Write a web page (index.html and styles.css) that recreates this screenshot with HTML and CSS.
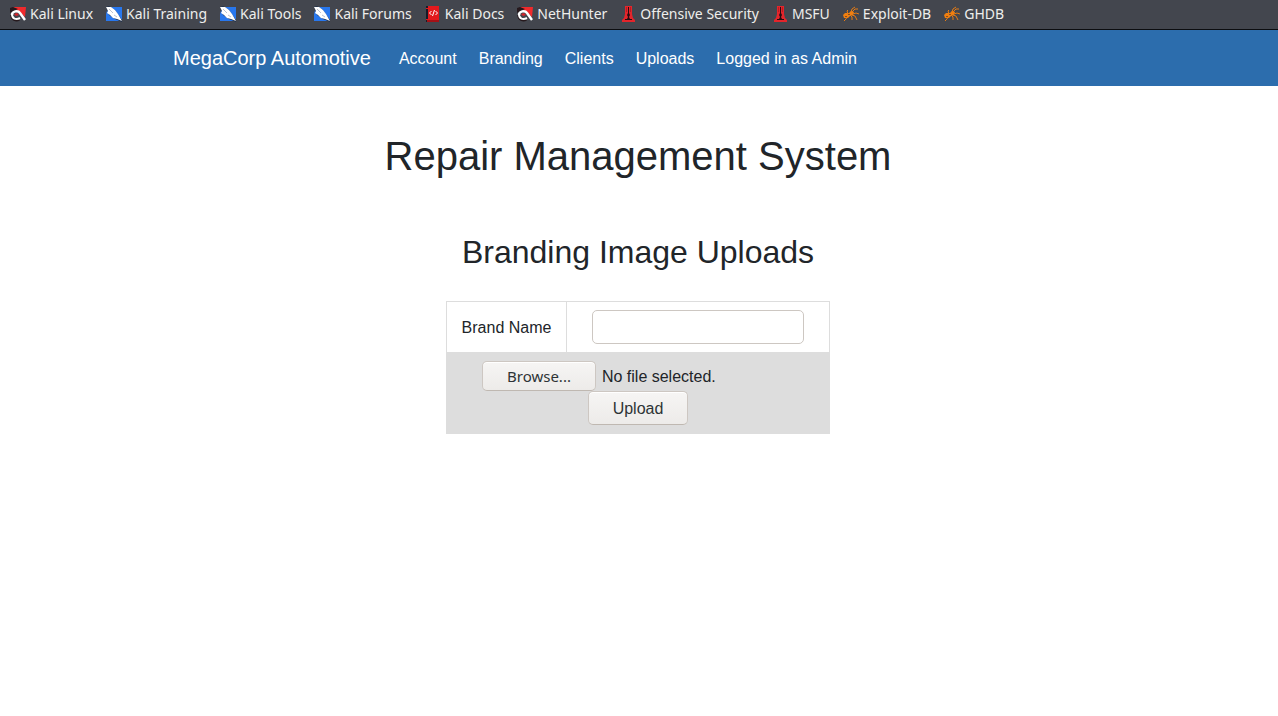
FILE: index.html
```
<!DOCTYPE html>
<html lang="en">
<head>
<meta charset="utf-8">
<meta name="viewport" content="width=device-width, initial-scale=1">
<title>Branding Image Uploads</title>
<link rel="stylesheet" href="styles.css">
</head>
<body>
<svg class="sprite" aria-hidden="true">
  <symbol id="dragon" viewBox="0 0 16 16">
    <path fill="#f02a2c" d="M3 1h13l-1 10-4-4-5-3z"/>
    <path fill="#26191d" d="M0 2l3-1 5 2-4 2-4 2z"/>
    <path fill="none" stroke="#26191d" stroke-width="3.4" d="M2 9c0 4 4 6 7 4"/>
    <path fill="none" stroke="#fff" stroke-width="2.4" d="M2 9c0-4 6-5 8-2l5 7"/>
    <path fill="none" stroke="#fff" stroke-width="2" d="M2 8c0 5 4 6 8 4"/>
    <path fill="#d8232a" d="M4 8l3-1 2 2-3 1z"/>
  </symbol>
  <symbol id="tools" viewBox="0 0 16 16">
    <path fill="#2877ed" d="M2 1h14v12l-2 2H0V8z"/>
    <path fill="#20324f" d="M0 1l3-1 6 4 7 10v2l-7-3-6-4z"/>
    <path fill="#fff" d="M0 1l5 0 4 3 3 4 4 7-5-2-4-1-3-3-3-2 1-2z"/>
    <path fill="none" stroke="#9da8b8" stroke-width=".7" d="M3 3l4 4M8 9l3 2"/>
  </symbol>
  <symbol id="docs" viewBox="0 0 16 16">
    <path fill="#171b28" d="M1 0h3v16H1z"/>
    <path fill="#e1191d" d="M3 0h11v14H3z"/>
    <path fill="#a51116" d="M2 14h12v2H2z"/>
    <path fill="#e1191d" d="M1 2h2v1H1zM1 13h2v1H1z"/>
    <path fill="none" stroke="#fff" stroke-width="1" d="M6.500 5L4.500 7l2 2M10.500 5l2 2-2 2M9.500 4l-2 6"/>
  </symbol>
  <symbol id="tower" viewBox="0 0 16 16">
    <path fill="#e4252b" d="M5 0h7v8l1 4 2 2v2H2v-2l2-2 1-4z"/>
    <path fill="#260c10" d="M8 1h1v6l1 2-1 2 1 2h2v1H5v-1h2l1-2-1-2 1-2z"/>
    <path fill="#b71c22" d="M6 1h1v5H6zM10 1h1v5h-1z"/>
  </symbol>
  <symbol id="spider" viewBox="0 0 16 16">
    <path fill="#f07f10" d="M0 9l2-2 4 0 2-2 3 1-1 3-3 1-2 2-4 0z"/>
    <path fill="none" stroke="#e57b14" stroke-width="1" d="M5 8l-1-3 1-1M8 6l1-3 3-2M9 6l3-3h3M10 8l3-1 3 1M9 9l3 1 2 4M7 9l2 2v3M4 11l-1 2-2 2"/>
    <path fill="#8b4e1b" d="M5 8h2v1H5zM2 10h2v1H2z"/>
  </symbol>
</svg>

<nav class="bookmarks" aria-label="Bookmarks">
  <a class="bookmark" href="#"><svg class="favicon"><use href="#dragon"/></svg>Kali Linux</a>
  <a class="bookmark" href="#"><svg class="favicon"><use href="#tools"/></svg>Kali Training</a>
  <a class="bookmark" href="#"><svg class="favicon"><use href="#tools"/></svg>Kali Tools</a>
  <a class="bookmark" href="#"><svg class="favicon"><use href="#tools"/></svg>Kali Forums</a>
  <a class="bookmark" href="#"><svg class="favicon"><use href="#docs"/></svg>Kali Docs</a>
  <a class="bookmark" href="#"><svg class="favicon"><use href="#dragon"/></svg>NetHunter</a>
  <a class="bookmark" href="#"><svg class="favicon"><use href="#tower"/></svg>Offensive Security</a>
  <a class="bookmark" href="#"><svg class="favicon"><use href="#tower"/></svg>MSFU</a>
  <a class="bookmark" href="#"><svg class="favicon"><use href="#spider"/></svg>Exploit-DB</a>
  <a class="bookmark" href="#"><svg class="favicon"><use href="#spider"/></svg>GHDB</a>
</nav>

<header class="navbar">
  <nav class="navbar-inner" aria-label="Main">
    <a class="brand" href="#">MegaCorp Automotive</a>
    <div class="nav-links">
      <a class="nav-link" href="#">Account</a>
      <a class="nav-link" href="#">Branding</a>
      <a class="nav-link" href="#">Clients</a>
      <a class="nav-link" href="#">Uploads</a>
      <a class="nav-link" href="#">Logged in as Admin</a>
    </div>
  </nav>
</header>

<main class="content">
  <h1 class="title">Repair Management System</h1>
  <h2 class="subtitle">Branding Image Uploads</h2>
  <form>
    <table class="upload-table">
      <tbody>
        <tr>
          <td class="name-cell"><label for="brand-name">Brand Name</label></td>
          <td class="field-cell"><input class="text-input" id="brand-name" type="text"></td>
        </tr>
        <tr class="shaded">
          <td class="file-cell" colspan="2">
            <div class="file-picker">
              <input class="file-input" id="brand-file" type="file">
              <label class="button browse" for="brand-file">Browse...</label>
              <span class="file-status">No file selected.</span>
            </div>
            <button class="button upload" type="submit">Upload</button>
          </td>
        </tr>
      </tbody>
    </table>
  </form>
</main>
</body>
</html>
```
FILE: styles.css
```
* {
  box-sizing: border-box;
}

body {
  margin: 0;
  background: #fff;
  color: #212529;
  font: 16px/24px "Liberation Sans", Arial, sans-serif;
}

a {
  color: inherit;
  text-decoration: none;
}

.sprite {
  display: none;
}

.bookmarks {
  display: flex;
  gap: 13px;
  padding: 0 10px 1px;
  overflow: hidden;
  background: #43464e;
  border-bottom: 1px solid #0c0d10;
  color: #eeeeec;
  font: 14px/28px "Noto Sans", sans-serif;
  white-space: nowrap;
}

.bookmark {
  display: flex;
  align-items: center;
  gap: 4px;
}

.favicon {
  flex: none;
  width: 16px;
  height: 16px;
}

.navbar {
  padding: 13px 16px;
  background: #2c6dad;
  color: #fff;
}

.navbar-inner {
  display: flex;
  flex-wrap: wrap;
  align-items: center;
  gap: 0 28px;
  max-width: 932px;
  margin: 0 auto;
}

.brand {
  font-size: 20px;
  line-height: 30px;
}

.nav-links {
  display: flex;
  flex-wrap: wrap;
  gap: 0 22px;
  padding-top: 2px;
}

.content {
  padding: 46px 18px 46px 16px;
  text-align: center;
}

.title {
  margin: 0 0 52px;
  font-size: 40px;
  font-weight: 400;
  line-height: 48px;
}

.subtitle {
  margin: 0 0 29px;
  font-size: 32px;
  font-weight: 400;
  line-height: 40px;
}

.upload-table {
  width: 384px;
  max-width: 100%;
  margin: 0 auto;
  border-collapse: collapse;
  border: 1px solid #ddd;
}

.name-cell {
  width: 120px;
  padding: 10px 0 8px;
  border-right: 1px solid #ddd;
}

.field-cell {
  padding: 8px 25px;
}

.shaded {
  background: #ddd;
}

.file-cell {
  padding: 9px 35px 8px;
}

.text-input {
  display: block;
  width: 100%;
  height: 34px;
  padding: 0 8px;
  border: 1px solid #cdc7c2;
  border-radius: 5px;
  background: #fff;
  color: inherit;
  font: inherit;
}

.file-picker {
  position: relative;
  display: flex;
  align-items: center;
  gap: 6px;
}

.file-input {
  position: absolute;
  width: 1px;
  height: 1px;
  opacity: 0;
}

.file-status {
  padding-top: 2px;
}

.button {
  padding: 0 24px;
  border: 1px solid #cdc7c2;
  border-bottom-color: #bfb8b1;
  border-radius: 5px;
  background: linear-gradient(#f6f5f4, #edebe9);
  box-shadow: inset 0 1px #fff;
  color: #2e3436;
  font: inherit;
}

.browse {
  font-family: "Noto Sans", sans-serif;
  font-size: 15px;
  line-height: 28px;
}

.upload {
  display: block;
  margin: 0 auto;
  padding-top: 2px;
  line-height: 30px;
}
```
